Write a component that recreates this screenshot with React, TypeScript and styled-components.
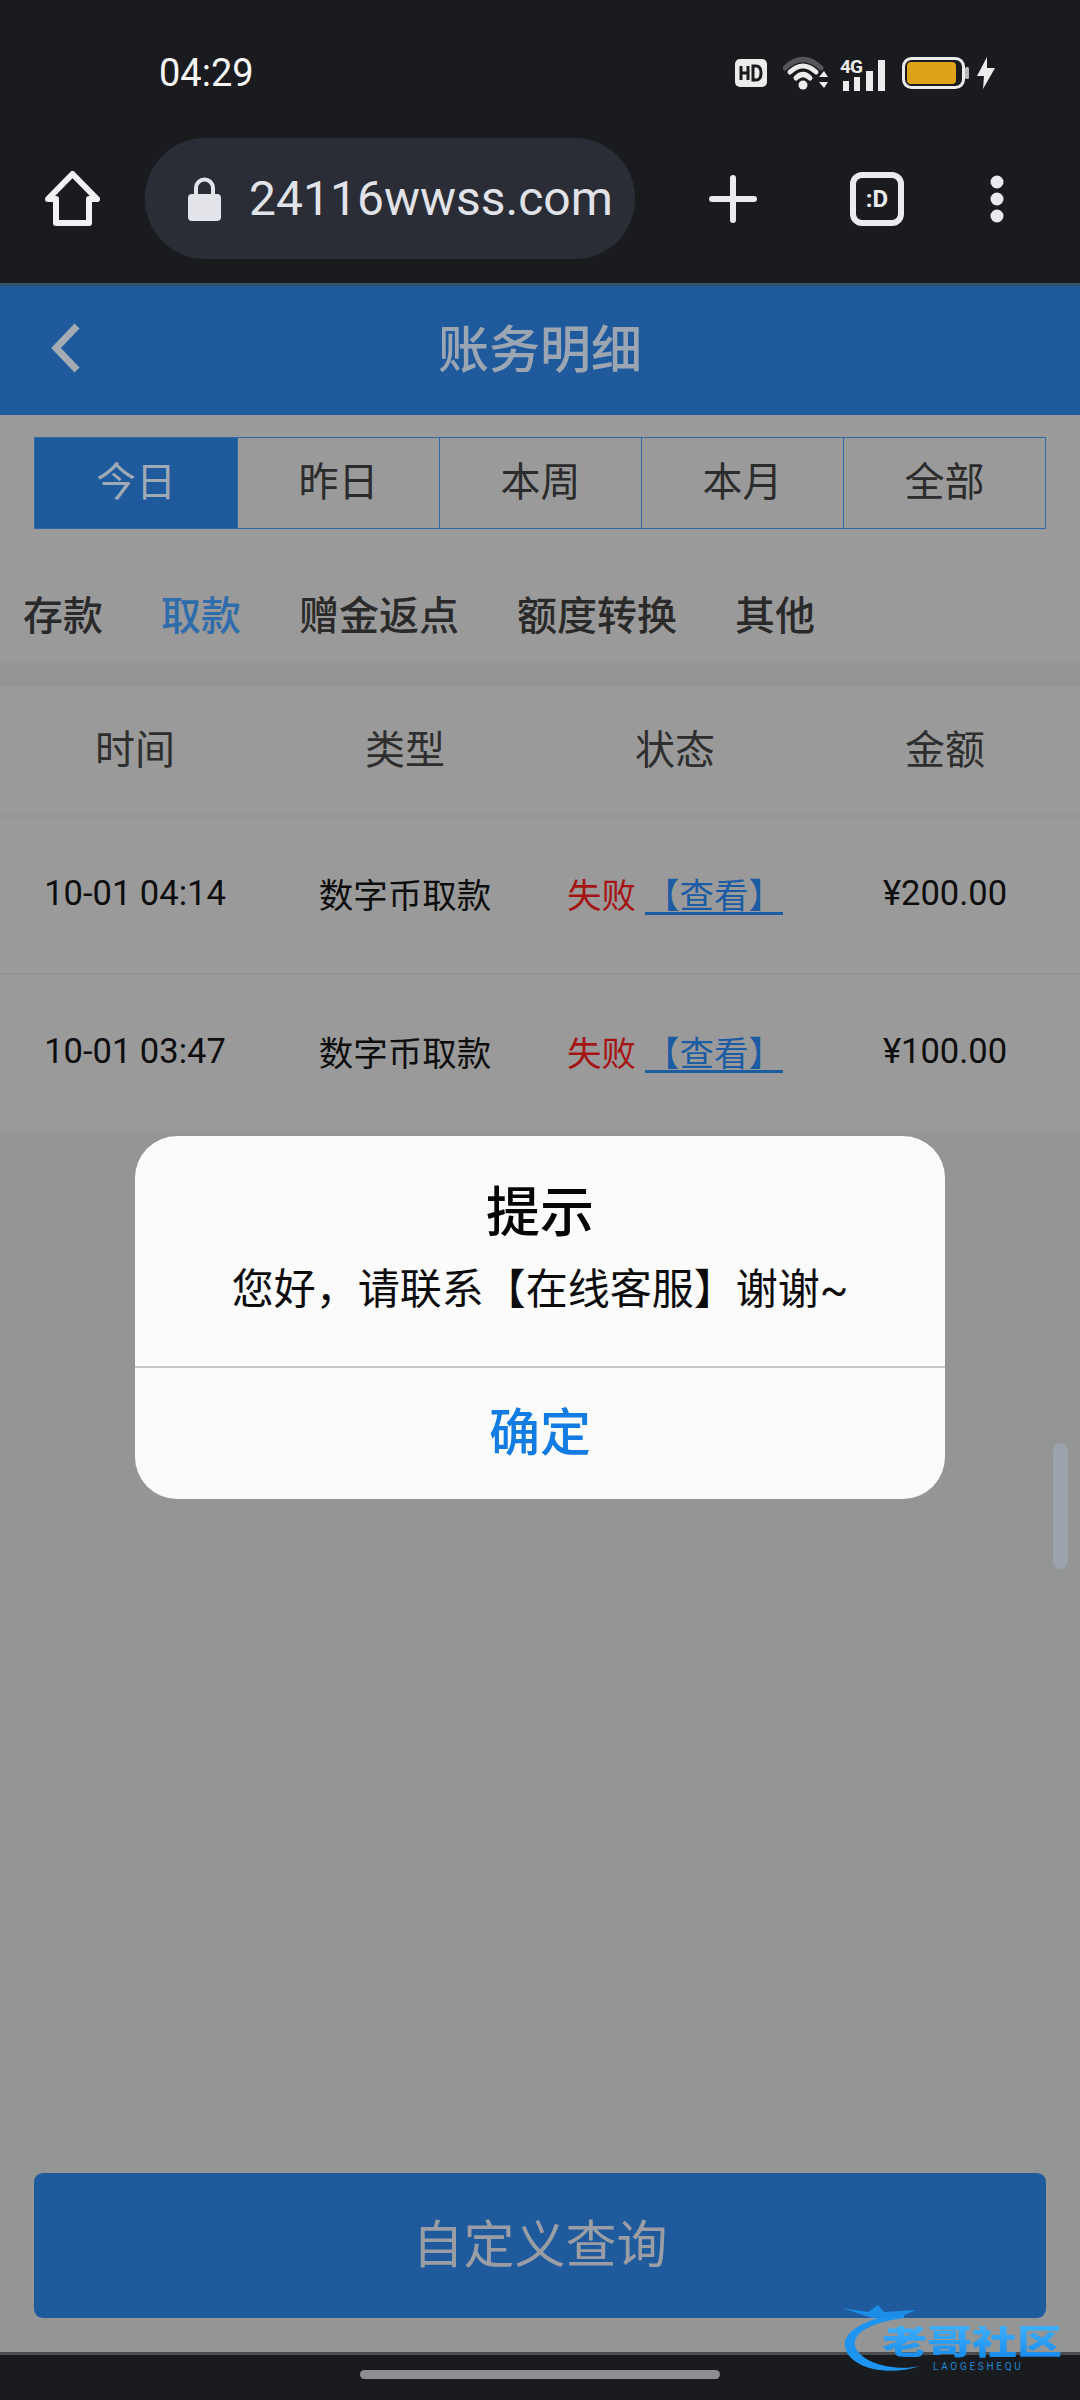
import React from 'react';
import styled, { createGlobalStyle } from 'styled-components';

const FONT = `Roboto, "Noto Sans CJK SC", sans-serif`;

const GlobalStyle = createGlobalStyle`
  html, body {
    margin: 0;
    padding: 0;
    background: #1a1b1f;
  }
  * {
    box-sizing: border-box;
  }
`;

const Screen = styled.div`
  width: 1080px;
  height: 2400px;
  display: flex;
  flex-direction: column;
  background: #1a1b1f;
  font-family: ${FONT};
  overflow: hidden;
  position: relative;
`;

const StatusBar = styled.div`
  height: 138px;
  flex: none;
  display: flex;
  align-items: flex-start;
  justify-content: space-between;
  padding: 54px 85px 0 159px;
`;

const Clock = styled.div`
  font-size: 38px;
  line-height: 38px;
  color: #f7f7f7;
`;

const StatusIcons = styled.div`
  display: flex;
  align-items: center;
  margin-top: 1px;
`;

const Toolbar = styled.div`
  height: 145px;
  flex: none;
  display: flex;
  align-items: flex-start;
  padding-left: 45px;
`;

const HomeButton = styled.div`
  width: 100px;
  height: 121px;
  display: flex;
  align-items: center;
`;

const UrlPill = styled.div`
  width: 490px;
  height: 121px;
  flex: none;
  display: flex;
  align-items: center;
  gap: 28px;
  padding-left: 43px;
  border-radius: 60px;
  background: #2a2d35;
`;

const UrlText = styled.span`
  font-size: 48px;
  line-height: 56px;
  color: #e1e3e9;
  white-space: nowrap;
`;

const ToolbarActions = styled.div`
  height: 121px;
  display: flex;
  align-items: center;
  padding-left: 74px;
`;

const TabCount = styled.div`
  width: 54px;
  height: 54px;
  margin-left: 93px;
  margin-right: 86px;
  display: flex;
  align-items: center;
  justify-content: center;
  border: 6px solid #ebebef;
  border-radius: 12px;
  color: #ebebef;
  font-size: 24px;
  font-weight: 700;
`;

const Web = styled.div`
  flex: 1;
  display: flex;
  flex-direction: column;
  position: relative;
  background: #949595;
`;

const Header = styled.header`
  height: 132px;
  flex: none;
  display: flex;
  align-items: center;
  justify-content: center;
  position: relative;
  padding-bottom: 9px;
  background: #1f5a9c;
  border-top: 3px solid #34506f;
`;

const BackIcon = styled.div`
  position: absolute;
  left: 50px;
  top: 37px;
  width: 32px;
  height: 50px;
`;

const Title = styled.h1`
  margin: 0;
  font-size: 51px;
  font-weight: 500;
  color: #9ca6b2;
`;

const TopArea = styled.div`
  height: 248px;
  flex: none;
  display: flex;
  flex-direction: column;
  background: #9a9a9a;
`;

const RangeTabs = styled.div`
  margin: 22px 34px 0;
  height: 92px;
  display: grid;
  grid-template-columns: repeat(5, 1fr);
  border: 1px solid #2f67a5;
`;

const RangeTab = styled.div<{ $active?: boolean; $first?: boolean }>`
  display: flex;
  align-items: center;
  justify-content: center;
  padding-bottom: 9px;
  font-size: 40px;
  color: ${p => (p.$active ? '#a0aab6' : '#2c2c2c')};
  background: ${p => (p.$active ? '#1f5a9c' : 'transparent')};
  border-left: ${p => (p.$first ? 'none' : '1px solid #2f67a5')};
`;

const TypeFilter = styled.div`
  display: flex;
  gap: 58px;
  padding: 59px 0 0 23px;
`;

const TypeItem = styled.span<{ $active?: boolean }>`
  font-size: 40px;
  line-height: 58px;
  white-space: nowrap;
  color: ${p => (p.$active ? '#2f6cab' : '#2a2a2a')};
  font-weight: 500;
`;

const Spacer = styled.div`
  height: 23px;
  flex: none;
  background: #949595;
`;

const Table = styled.div`
  flex: none;
  background: #9a9a9a;
`;

const Row = styled.div<{ $head?: boolean }>`
  height: ${p => (p.$head ? '129px' : '158px')};
  display: grid;
  grid-template-columns: repeat(4, 270px);
  align-items: center;
  justify-items: center;
  padding-bottom: ${p => (p.$head ? '8px' : '4px')};
  border-top: ${p => (p.$head ? '1px solid #979797' : '2px solid #959595')};
  font-size: ${p => (p.$head ? '40px' : '34.5px')};
  color: ${p => (p.$head ? '#2e2e2e' : '#0d0d0d')};
`;

const StatusCell = styled.div`
  display: flex;
  align-items: center;
  white-space: nowrap;
`;

const Failed = styled.span`
  color: #a51414;
  margin-right: 9px;
`;

const ViewLink = styled.span`
  color: #1c5ca3;
  text-decoration: underline;
  text-decoration-thickness: 3px;
  text-underline-offset: 4px;
`;

const Fill = styled.div`
  flex: 1;
`;

const Dialog = styled.div`
  position: absolute;
  left: 135px;
  top: 853px;
  width: 810px;
  height: 363px;
  display: flex;
  flex-direction: column;
  background: #fbfbfc;
  border-radius: 42px;
`;

const DialogBody = styled.div`
  height: 232px;
  flex: none;
  display: flex;
  flex-direction: column;
  align-items: center;
  padding-top: 42px;
  border-bottom: 2px solid #c6c6c8;
`;

const DialogTitle = styled.div`
  font-size: 54px;
  line-height: 72px;
  font-weight: 500;
  color: #050505;
`;

const DialogText = styled.div`
  margin-top: 10px;
  font-size: 42px;
  line-height: 60px;
  color: #0b0b0b;
  white-space: nowrap;
`;

const DialogButton = styled.div`
  flex: 1;
  display: flex;
  align-items: center;
  justify-content: center;
  padding-bottom: 9px;
  font-size: 51px;
  font-weight: 500;
  color: #137ce2;
`;

const Scrollbar = styled.div`
  position: absolute;
  left: 1053px;
  top: 1160px;
  width: 15px;
  height: 126px;
  border-radius: 8px;
  background: #9ba3ad;
`;

const QueryButton = styled.div`
  height: 145px;
  flex: none;
  margin: 0 34px 34px;
  padding-bottom: 9px;
  display: flex;
  align-items: center;
  justify-content: center;
  background: #1f5a9c;
  border-radius: 9px;
  font-size: 51px;
  color: #9a9da4;
`;

const NavBar = styled.div`
  height: 48px;
  flex: none;
  display: flex;
  justify-content: center;
  padding-top: 15px;
  background: #1a1b1f;
  border-top: 3px solid #4b4c4e;
`;

const NavHandle = styled.div`
  width: 360px;
  height: 9px;
  border-radius: 5px;
  background: #8e8e90;
`;

const Watermark = styled.div`
  position: absolute;
  left: 842px;
  top: 2304px;
  width: 224px;
  height: 74px;
`;

const WatermarkName = styled.div`
  position: absolute;
  left: 40px;
  top: 16px;
  font-size: 45px;
  line-height: 46px;
  font-weight: 900;
  white-space: nowrap;
  transform: scaleY(0.76);
  background: linear-gradient(180deg, #3fb0ff 0%, #1589ea 100%);
  -webkit-background-clip: text;
  background-clip: text;
  color: transparent;
`;

const WatermarkSub = styled.div`
  position: absolute;
  left: 91px;
  top: 57px;
  font-size: 10px;
  line-height: 12px;
  letter-spacing: 2.7px;
  color: #1e86d6;
  white-space: nowrap;
`;

const HomeIcon = () => (
  <svg width="55" height="56" viewBox="0 0 55 56" fill="none" stroke="#f2f2f4" strokeWidth="6" strokeLinejoin="round" strokeLinecap="round">
    <path d="M3 28 L27.5 3 L52 28 H44 V52 H11 V28 Z" />
  </svg>
);

const LockIcon = () => (
  <svg width="33" height="44" viewBox="0 0 33 44">
    <path d="M8 19 V11 a8.5 8.5 0 0 1 17 0 V19" fill="none" stroke="#e3e4ea" strokeWidth="4" />
    <rect x="0" y="17" width="33" height="27" rx="4" fill="#e3e4ea" />
  </svg>
);

const PlusIcon = () => (
  <svg width="48" height="48" viewBox="0 0 48 48" stroke="#ebebef" strokeWidth="6" strokeLinecap="round">
    <path d="M24 3 V45 M3 24 H45" />
  </svg>
);

const MenuDots = () => (
  <svg width="14" height="48" viewBox="0 0 14 48" fill="#ebebef">
    <circle cx="7" cy="7" r="6.5" />
    <circle cx="7" cy="24" r="6.5" />
    <circle cx="7" cy="41" r="6.5" />
  </svg>
);

const HdBadge = () => (
  <svg width="32" height="28" viewBox="0 0 32 28">
    <rect width="32" height="28" rx="5" fill="#ececec" />
    <path d="M6 7 V21 M13 7 V21 M6 14 H13 M18 7 V21 H21 Q26 21 26 14 Q26 7 21 7 Z" fill="none" stroke="#1a1b1f" strokeWidth="3" />
  </svg>
);

const WifiIcon = () => (
  <svg width="45" height="34" viewBox="0 0 45 34" fill="none" strokeLinecap="round" style={{ marginLeft: 16 }}>
    <path d="M2 12 Q20 -5 38 12" stroke="#55565a" strokeWidth="5" />
    <path d="M7 16 Q20 4 33 16" stroke="#ececec" strokeWidth="5" />
    <path d="M13 22 Q20 15 27 22" stroke="#ececec" strokeWidth="5" />
    <circle cx="20" cy="29" r="4.5" fill="#ececec" />
    <path d="M36 21 L41 15 L45 21 Z M36 26 H45 L41 32 Z" fill="#ececec" />
  </svg>
);

const SignalIcon = () => (
  <svg width="48" height="36" viewBox="0 0 48 36" fill="#ececec" style={{ marginLeft: 11 }}>
    <rect x="4" y="26" width="6" height="10" />
    <rect x="15" y="22" width="6" height="14" />
    <rect x="27" y="16" width="7" height="20" />
    <rect x="39" y="5" width="7" height="31" />
    <text x="1" y="18" fontFamily="Roboto, sans-serif" fontSize="19" fontWeight="700" letterSpacing="-1">4G</text>
  </svg>
);

const BatteryIcon = () => (
  <svg width="67" height="32" viewBox="0 0 67 32" style={{ marginLeft: 15 }}>
    <rect x="1.5" y="1.5" width="60" height="29" rx="8" fill="none" stroke="#ececec" strokeWidth="3" />
    <rect x="5" y="5" width="49" height="22" rx="4" fill="#dfa31a" />
    <rect x="63" y="10" width="4" height="12" rx="1.5" fill="#b9b9b9" />
  </svg>
);

const BoltIcon = () => (
  <svg width="18" height="32" viewBox="0 0 18 32" fill="#ececec" style={{ marginLeft: 8 }}>
    <path d="M10 0 L0 19 H7 L6 32 L18 11 H10 Z" />
  </svg>
);

const ChevronLeft = () => (
  <svg width="32" height="50" viewBox="0 0 32 50" fill="none" stroke="#a4abb3" strokeWidth="7">
    <path d="M27 3 L6 25 L27 47" />
  </svg>
);

const WatermarkSwoosh = () => (
  <svg width="224" height="74" viewBox="0 0 224 74">
    <path d="M62 9 C22 14 1 28 3 42 C5 62 42 74 78 62 C50 68 18 58 13 42 C10 28 32 18 62 14 Z" fill="#1c94f0" />
    <path d="M0 4 L26 8 L36 1 L42 8 L74 6 L58 13 L30 14 Z" fill="#1b8de6" />
  </svg>
);

const ranges = ['今日', '昨日', '本周', '本月', '全部'];
const types = ['存款', '取款', '赠金返点', '额度转换', '其他'];
const records = [
  { time: '10-01 04:14', amount: '¥200.00' },
  { time: '10-01 03:47', amount: '¥100.00' },
];

export default function App() {
  return (
    <Screen>
      <GlobalStyle />
      <StatusBar>
        <Clock>04:29</Clock>
        <StatusIcons>
          <HdBadge />
          <WifiIcon />
          <SignalIcon />
          <BatteryIcon />
          <BoltIcon />
        </StatusIcons>
      </StatusBar>
      <Toolbar>
        <HomeButton>
          <HomeIcon />
        </HomeButton>
        <UrlPill>
          <LockIcon />
          <UrlText>24116wwss.com</UrlText>
        </UrlPill>
        <ToolbarActions>
          <PlusIcon />
          <TabCount>:D</TabCount>
          <MenuDots />
        </ToolbarActions>
      </Toolbar>
      <Web>
        <Header>
          <BackIcon>
            <ChevronLeft />
          </BackIcon>
          <Title>账务明细</Title>
        </Header>
        <TopArea>
          <RangeTabs>
            {ranges.map((r, i) => (
              <RangeTab key={r} $active={i === 0} $first={i === 0}>{r}</RangeTab>
            ))}
          </RangeTabs>
          <TypeFilter>
            {types.map(t => (
              <TypeItem key={t} $active={t === '取款'}>{t}</TypeItem>
            ))}
          </TypeFilter>
        </TopArea>
        <Spacer />
        <Table>
          <Row $head>
            <span>时间</span>
            <span>类型</span>
            <span>状态</span>
            <span>金额</span>
          </Row>
          {records.map(r => (
            <Row key={r.time}>
              <span>{r.time}</span>
              <span>数字币取款</span>
              <StatusCell>
                <Failed>失败</Failed>
                <ViewLink>【查看】</ViewLink>
              </StatusCell>
              <span>{r.amount}</span>
            </Row>
          ))}
        </Table>
        <Fill />
        <QueryButton>自定义查询</QueryButton>
        <Dialog>
          <DialogBody>
            <DialogTitle>提示</DialogTitle>
            <DialogText>您好，请联系【在线客服】谢谢~</DialogText>
          </DialogBody>
          <DialogButton>确定</DialogButton>
        </Dialog>
        <Scrollbar />
      </Web>
      <NavBar>
        <NavHandle />
      </NavBar>
      <Watermark>
        <WatermarkSwoosh />
        <WatermarkName>老哥社区</WatermarkName>
        <WatermarkSub>LAOGESHEQU</WatermarkSub>
      </Watermark>
    </Screen>
  );
}
